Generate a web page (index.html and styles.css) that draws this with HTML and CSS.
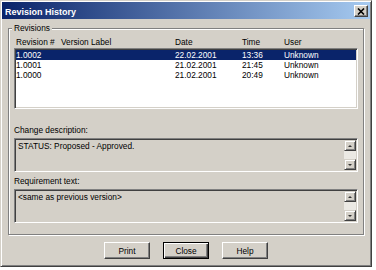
FILE: index.html
```html
<!DOCTYPE html>
<html>
  <head>
    <title>Revision History</title>
    <link rel="stylesheet" href="styles.css">
  </head>
  <body>
    <div class="window">
      <div class="titlebar">
        <span class="title">Revision History</span>
        <button class="close-btn">
          <svg width="8" height="7" viewBox="0 0 8 7">
            <path d="M1 0.5 L7 6.5 M7 0.5 L1 6.5" stroke="#000" stroke-width="1.6" fill="none" />
          </svg>
        </button>
      </div>
      <div class="content">
        <div class="group">
          <span class="group-title">Revisions</span>
          <div class="cols header">
            <span>Revision #</span>
            <span>Version Label</span>
            <span>Date</span>
            <span>Time</span>
            <span>User</span>
          </div>
          <div class="list">
            <div class="cols row selected">
              <span>1.0002</span><span></span><span>22.02.2001</span><span>13:36</span><span>Unknown</span>
            </div>
            <div class="cols row">
              <span>1.0001</span><span></span><span>21.02.2001</span><span>21:45</span><span>Unknown</span>
            </div>
            <div class="cols row">
              <span>1.0000</span><span></span><span>21.02.2001</span><span>20:49</span><span>Unknown</span>
            </div>
          </div>

          <div class="field-label first-label">Change description:</div>
          <div class="textbox">
            <div class="textbox-text">STATUS: Proposed - Approved.</div>
            <div class="scrollbar">
              <span class="sb-btn"><span class="arrow-up"></span></span>
              <span class="sb-track"></span>
              <span class="sb-btn"><span class="arrow-down"></span></span>
            </div>
          </div>

          <div class="field-label">Requirement text:</div>
          <div class="textbox">
            <div class="textbox-text">&lt;same as previous version&gt;</div>
            <div class="scrollbar">
              <span class="sb-btn"><span class="arrow-up"></span></span>
              <span class="sb-track"></span>
              <span class="sb-btn"><span class="arrow-down"></span></span>
            </div>
          </div>
        </div>

        <div class="buttons">
          <button class="btn">Print</button>
          <button class="btn default">Close</button>
          <button class="btn">Help</button>
        </div>
      </div>
    </div>
  </body>
</html>
```

FILE: styles.css
```css
body {
  margin: 0;
  background-color: #fff;
  font-family: "Liberation Sans", Arial, sans-serif;
  font-size: 8.3px;
  color: #000;
}

.window {
  width: 372px;
  height: 267px;
  box-sizing: border-box;
  background-color: #d4d0c8;
  border: 1px solid;
  border-color: #d4d0c8 #404040 #404040 #d4d0c8;
  box-shadow: inset 1px 1px 0 #fff, inset -1px -1px 0 #808080;
  padding: 1px;
  display: flex;
  flex-direction: column;
}

.titlebar {
  height: 17px;
  display: flex;
  align-items: center;
  justify-content: space-between;
  background: linear-gradient(to right, #0a246a, #a6caf0);
  padding: 0 2px 0 3px;
}

.title {
  color: #fff;
  font-weight: bold;
  font-size: 9px;
  padding-top: 2px;
}

.close-btn {
  width: 14px;
  height: 12px;
  padding: 0;
  margin-top: 1px;
  background-color: #d4d0c8;
  border: 1px solid;
  border-color: #fff #404040 #404040 #fff;
  box-shadow: inset -1px -1px 0 #808080;
  display: flex;
  align-items: center;
  justify-content: center;
}

.content {
  padding: 9px 6px 0 6px;
}

/* Etched group box */
.group {
  position: relative;
  border: 1px solid #808080;
  box-shadow: inset 1px 1px 0 #fff, 1px 1px 0 #fff;
  padding: 8px 5px 11px 5px;
}

.group-title {
  position: absolute;
  top: -6px;
  left: 3px;
  padding: 0 2px;
  line-height: 10px;
  background-color: #d4d0c8;
}

.cols {
  display: grid;
  grid-template-columns: 45px 114px 67px 42px 1fr;
  line-height: 10px;
  white-space: nowrap;
}

.header {
  padding-left: 2px;
  height: 10px;
  margin-bottom: 1px;
}

.list {
  height: 57px;
  background-color: #fff;
  border: 1px solid;
  border-color: #808080 #fff #fff #808080;
  box-shadow: inset 1px 1px 0 #404040, inset -1px -1px 0 #d4d0c8;
  padding: 1px;
}

.row {
  height: 10px;
}

.row.selected {
  background-color: #0a246a;
  color: #fff;
}

.field-label {
  line-height: 10px;
  margin: 4px 0 3px 0;
}

.first-label {
  margin-top: 16px;
}

.textbox {
  height: 34px;
  box-sizing: border-box;
  display: flex;
  border: 1px solid;
  border-color: #808080 #fff #fff #808080;
  box-shadow: inset 1px 1px 0 #404040, inset -1px -1px 0 #d4d0c8;
  padding: 1px;
}

.textbox-text {
  flex: 1;
  padding: 1px 2px;
  line-height: 10px;
}

.scrollbar {
  width: 12px;
  display: flex;
  flex-direction: column;
}

.sb-btn {
  height: 11px;
  box-sizing: border-box;
  background-color: #d4d0c8;
  border: 1px solid;
  border-color: #d4d0c8 #404040 #404040 #d4d0c8;
  box-shadow: inset 1px 1px 0 #fff, inset -1px -1px 0 #808080;
  display: flex;
  align-items: center;
  justify-content: center;
}

.sb-track {
  flex: 1;
  background-color: #ebe9e4;
}

.arrow-up {
  width: 0;
  height: 0;
  border-left: 2px solid transparent;
  border-right: 2px solid transparent;
  border-bottom: 2px solid #333;
}

.arrow-down {
  width: 0;
  height: 0;
  border-left: 2px solid transparent;
  border-right: 2px solid transparent;
  border-top: 2px solid #333;
}

.buttons {
  display: flex;
  justify-content: center;
  gap: 13px;
  margin-top: 7px;
}

.btn {
  width: 46px;
  height: 17px;
  padding: 0;
  font-family: "Liberation Sans", Arial, sans-serif;
  font-size: 8.3px;
  color: #000;
  background-color: #d4d0c8;
  border: 1px solid;
  border-color: #fff #404040 #404040 #fff;
  box-shadow: inset -1px -1px 0 #808080;
}

.btn.default {
  border: 1px solid #000;
  box-shadow: inset 1px 1px 0 #fff, inset -1px -1px 0 #404040, inset -2px -2px 0 #808080;
}
```
